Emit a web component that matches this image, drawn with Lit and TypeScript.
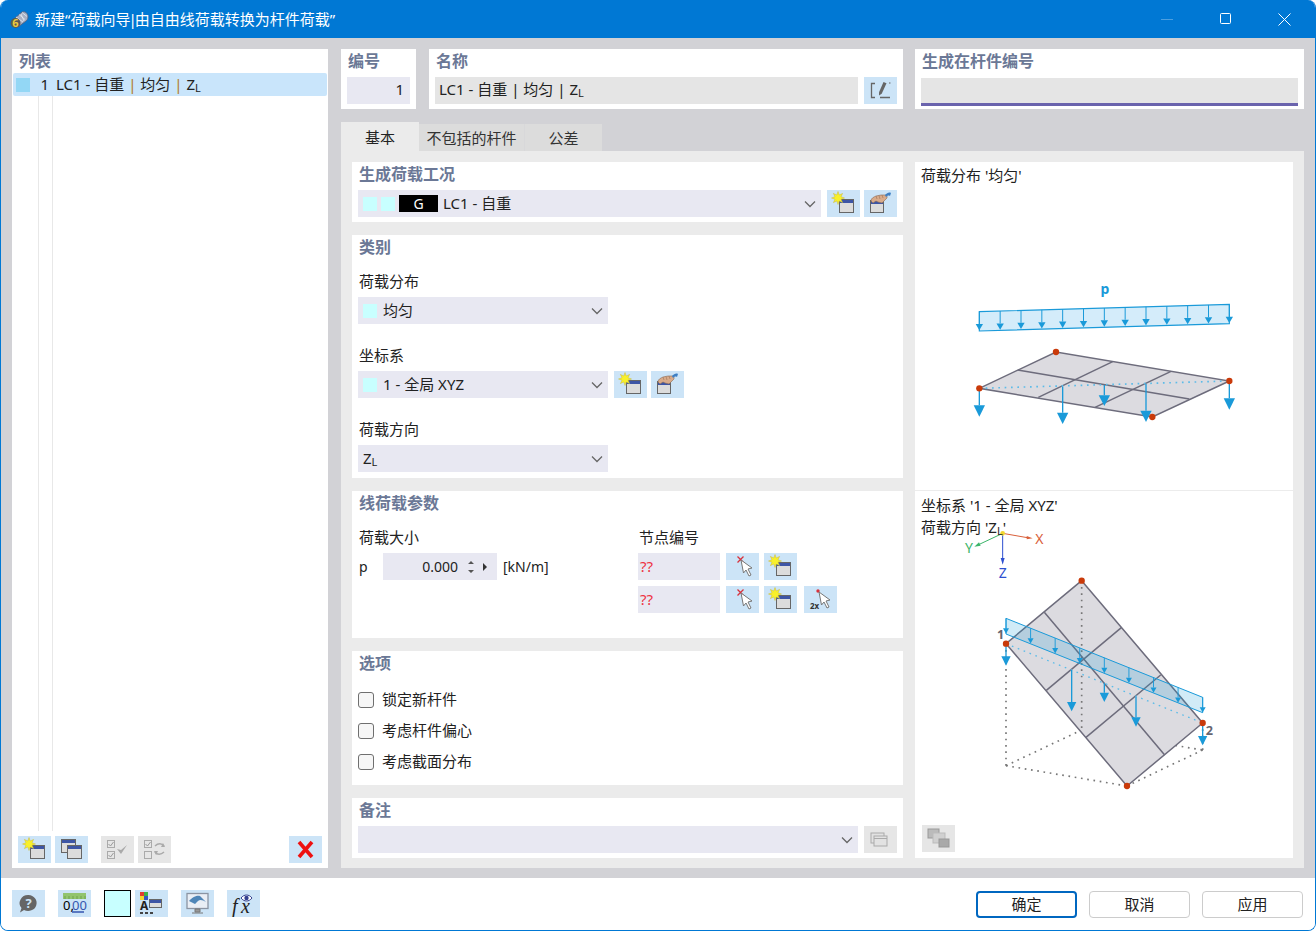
import { LitElement, html, css, svg } from "lit";
import { customElement } from "lit/decorators.js";

const BLUE = "#1a9ad9";
const GREY = "#6d6c7c";

const star = (cx: number, cy: number, r = 6.5) => {
  const pts: string[] = [];
  for (let i = 0; i < 16; i++) {
    const a = (i * Math.PI) / 8;
    const rr = i % 2 ? r * 0.5 : r;
    pts.push(`${(cx + rr * Math.cos(a)).toFixed(1)},${(cy + rr * Math.sin(a)).toFixed(1)}`);
  }
  return svg`<polygon points=${pts.join(" ")} fill="#f8f02a" stroke="#c9b93a" stroke-width=".5"/>`;
};
const win = (x: number, y: number, w: number, h: number) => svg`
  <rect x=${x + 0.5} y=${y + 0.5} width=${w - 1} height=${h - 1} fill="#dcdcdc" stroke="#666"/>
  <rect x=${x + 1} y=${y + 1} width=${w - 2} height="3" fill="#3d55a5"/>`;
const wrap = (c: unknown) => html`<svg class="ic" viewBox="0 0 33 27" width="33" height="27">${c}</svg>`;

const icNew = () => wrap(svg`${win(12, 9, 15, 14)}${star(11, 8)}`);
const icHand = () => wrap(svg`${win(6, 10, 14, 13)}
  <path d="M7 11c0-3 3-4 5-5l5-1 6 0 0 3-3 3-2 2-4-1-2-1-3 2z" fill="#d9ab8a" stroke="#8a6a55" stroke-width=".6"/>
  <path d="M12 6l1 3M15 5.500l1 3.500M18 5l1 3" stroke="#9a7258" stroke-width=".6"/>
  <path d="M21 5c2-2 4-3 6-2l-1 3c-2-1-3 0-4 1z" fill="#3d7fc4"/>`);
const icCopy = () => wrap(svg`${win(6, 3, 15, 14)}${win(12, 9, 15, 14)}`);
const icEdit = () => wrap(svg`
  <path d="M11 6.500H7.500V20.500H11M16 20.500H26" fill="none" stroke="#666" stroke-width="1.300"/>
  <path d="M19.500 5l3 1.300-4.800 10.500-2.700 1.700 0-3.300z" fill="#666"/>
  <path d="M25 6h1.500" stroke="#666"/>`);
const chk = (x: number, y: number, on = true) => svg`
  <rect x=${x + 0.5} y=${y + 0.5} width="7" height="7" fill="#e6e6e6" stroke="#aaa"/>
  ${on ? svg`<path d="M${x + 1.5} ${y + 4}l2 2 3-4" fill="none" stroke="#999"/>` : ""}`;
const icChecks = () => wrap(svg`${chk(6, 4)}${chk(6, 15)}<path d="M16 13l4 5 6-9-6 5z" fill="#aaa"/>`);
const icSwap = () => wrap(svg`${chk(6, 4)}${chk(6, 15, false)}
  <path d="M17 10c3-3 7-3 9 0M26 16c-3 3-7 3-9 0" fill="none" stroke="#aaa" stroke-width="1.500"/>
  <path d="M25 7l2 4-4 0zM18 19l-2-4 4 0z" fill="#aaa"/>`);
const icX = () => wrap(svg`<path d="M10 6l13 15M23 6L10 21" stroke="#ee1111" stroke-width="3.600"/>`);
const cursor = (x: number, y: number) => svg`
  <path d="M${x} ${y}l2.500 13 2.500-3 3 6 2-1-3-6 4-1z" fill="#fff" stroke="#777"/>`;
const icPickX = () => wrap(svg`<path d="M11.500 3.500l6 6M17.500 3.500l-6 6" stroke="#d8323c" stroke-width="1.300"/>${cursor(15, 7)}`);
const ic2x = () => wrap(svg`<circle cx="14" cy="5" r="1.700" fill="#d8323c"/>${cursor(15, 6)}
  <text x="6" y="23" class="t2x">2x</text>`);
const icHelp = () => wrap(svg`
  <path d="M16.500 5a8.500 8 0 1 1-4.500 15l-4 2.500 1.500-4.500a8.500 8 0 0 1 7-13z" fill="#666"/>
  <text x="16.500" y="18" text-anchor="middle" class="thelp">?</text>`);
const icDec = () => wrap(svg`
  <rect x="5" y="3" width="23" height="6" fill="#92c46f"/>
  <path d="M7 6v3M11 6v3M15 6v3M19 6v3M23 6v3M27 6v3" stroke="#5f9a3e" stroke-width=".7"/>
  <text x="5" y="20" class="tdec">0,</text>
  <text x="14" y="20" class="tdec" fill="#3456b0">00</text>
  <path d="M14 22h12" stroke="#3456b0" stroke-width="1.300"/>`);
const icColors = () => wrap(svg`
  <rect x="5" y="2" width="4" height="4" fill="#e23b2f"/><rect x="9" y="2" width="4" height="4" fill="#3cb04a"/>
  <rect x="5" y="6" width="4" height="4" fill="#f2d52f"/><rect x="9" y="6" width="4" height="4" fill="#3456c4"/>
  <text x="5" y="20" class="tA">A</text>
  <path d="M5 22h3v2H5zM10 22h3v2h-3zM15 22h3v2h-3z" fill="#444"/>
  ${win(14, 9, 13, 9)}`);
const icMon = () => wrap(svg`
  <rect x="6" y="3.500" width="21" height="15" fill="#e9eef5" stroke="#8b94a3" stroke-width="1.300"/>
  <path d="M8 11c4-5 9-6 11-5l6 6c-3-2-6-3-8-1l-3 3z" fill="#4f86b8"/>
  <path d="M14 19h5v3h-5zM11 23h11" stroke="#777" fill="#999"/>`);
const icFx = () => wrap(svg`
  <text x="5" y="23" class="tfx">f</text><text x="14" y="23" class="tfx">x</text>
  <path d="M14 8c3-4 8-4 11 0-3 4-8 4-11 0z" fill="#fff" stroke="#34408f"/>
  <circle cx="19.500" cy="8" r="2.200" fill="#34408f"/>`);
const icGallery = () => wrap(svg`
  <rect x="6" y="4" width="11" height="9" fill="#bbb" stroke="#999"/>
  <rect x="11" y="8" width="12" height="10" fill="#d0d0d0" stroke="#bbb"/>
  <rect x="17" y="14" width="10" height="8" fill="#a9a9a9" stroke="#999"/>`);
const icStack = () => wrap(svg`
  <rect x="7" y="7" width="13" height="10" fill="#e2e2e2" stroke="#aaa"/>
  <rect x="10" y="10" width="13" height="10" fill="#e2e2e2" stroke="#aaa"/>
  <path d="M10 12.500h13" stroke="#aaa"/>`);

const chevron = html`<svg class="chev" viewBox="0 0 12 8" width="12" height="8"><path d="M1 1.500l5 5 5-5" fill="none" stroke="#666" stroke-width="1.300"/></svg>`;
const zl = html`<span class="zl">Z<sub>L</sub></span>`;

const arrow = (x: number, y1: number, y2: number, hw: number, hh: number, sw: number) => svg`
  <path d="M${x} ${y1}V${y2 - hh}" stroke=${BLUE} stroke-width=${sw}/>
  <polygon points="${x - hw},${y2 - hh} ${x + hw},${y2 - hh} ${x},${y2}" fill=${BLUE}/>`;
const dot = (x: number, y: number, r = 9.5) => svg`<circle cx=${x} cy=${y} r=${r} fill="#c93a0a"/>`;
const line = (a: number[]) => svg`<path d="M${a[0]} ${a[1]}L${a[2]} ${a[3]}" stroke=${GREY} stroke-width="4.500"/>`;
const dotted = (a: number[], c = "#777", w = 5) => svg`<path d="M${a[0]} ${a[1]}L${a[2]} ${a[3]}" stroke=${c} stroke-width=${w} stroke-dasharray="5 14"/>`;

const range = (n: number) => Array.from({ length: n }, (_, i) => i);

const diagram1 = () => html`<svg class="dia" viewBox="15 6 1134 987" width="378" height="329">
  <polygon points="208,455 958,433 958,491 208,513" fill="#d4ecfa" stroke=${BLUE} stroke-width="3.500"/>
  ${range(13).map((i) => {
    const x = 208 + i * 62.5;
    const t = 455 - (i * 22) / 12;
    return arrow(x, t, t + 56, 11, 19, 3);
  })}
  <text x="585" y="402" text-anchor="middle" class="tp">p</text>
  <polygon points="208,685 438,576 958,663 727,771" fill="#dcdbe0" stroke=${GREY} stroke-width="4.500"/>
  ${[[323, 630, 838, 717], [608, 605, 385, 712], [783, 634, 555, 742]].map(line)}
  ${dotted([208, 685, 958, 663], "#5cbbe8")}
  ${arrow(208, 685, 770, 17, 34, 4)}${arrow(458, 680, 792, 17, 34, 4)}${arrow(583, 675, 738, 17, 32, 4)}
  ${arrow(708, 672, 786, 17, 34, 4)}${arrow(958, 663, 749, 17, 34, 4)}
  ${dot(208, 685)}${dot(438, 576)}${dot(958, 663)}${dot(727, 771)}
</svg>`;

const diagram2 = () => html`<svg class="dia" viewBox="15 3 1134 1101" width="378" height="367">
  ${[[288, 461, 288, 827], [288, 827, 651, 888], [288, 827, 515, 720], [515, 720, 878, 780], [878, 780, 651, 888], [878, 699, 878, 780]].map((a) => dotted(a))}
  <polygon points="515,272 878,699 651,888 288,461" fill="#dcdbe0" stroke=${GREY} stroke-width="4.500"/>
  ${dotted([515, 272, 515, 720])}
  ${[[403, 367, 764, 795], [634, 413, 409, 601], [752, 555, 527, 743]].map(line)}
  ${dotted([288, 461, 878, 699], "#5cbbe8", 4)}
  <polygon points="288,385 878,622 878,668 288,432" fill="#1a9ad9" fill-opacity=".2" stroke=${BLUE} stroke-width="3"/>
  ${range(9).map((i) => {
    const x = 288 + i * 73.75;
    const t = 385 + i * 29.6;
    return arrow(x, t, t + 46, 9, 16, 2.800);
  })}
  ${arrow(288, 461, 527, 14, 28, 4)}${arrow(485, 540, 664, 14, 28, 4)}${arrow(583, 578, 636, 14, 28, 4)}
  ${arrow(678, 620, 710, 14, 28, 4)}${arrow(878, 699, 766, 14, 28, 4)}
  ${dot(515, 272)}${dot(288, 461)}${dot(878, 699)}${dot(651, 888)}
  <text x="272" y="446" text-anchor="middle" class="tn">1</text>
  <text x="898" y="736" text-anchor="middle" class="tn">2</text>
  <path d="M278 130L352 143" stroke="#d9603b" stroke-width="3"/><polygon points="368,145 350,138 350,148" fill="#d9603b"/>
  <path d="M278 130L208 163" stroke="#3cb56a" stroke-width="3"/><polygon points="193,170 207,157 212,167" fill="#3cb56a"/>
  <path d="M278 130V206" stroke="#2d4fd0" stroke-width="3"/><polygon points="278,224 272,204 284,204" fill="#2d4fd0"/>
  <circle cx="278" cy="130" r="7" fill="#f2d52f"/>
  <text x="388" y="163" text-anchor="middle" class="ta" fill="#d9603b">X</text>
  <text x="177" y="188" text-anchor="middle" class="ta" fill="#3cb56a">Y</text>
  <text x="278" y="263" text-anchor="middle" class="ta" fill="#2d4fd0">Z</text>
</svg>`;

@customElement("app-root")
export class AppRoot extends LitElement {
  static styles = css`
    :host {
      display: block;
      width: 1316px;
      height: 931px;
      background: #fff;
      font-family: "Noto Sans", "Noto Sans CJK SC", sans-serif;
      font-size: 15px;
      color: #222;
      overflow: hidden;
    }
    * { box-sizing: border-box; }
    .win { width: 1316px; height: 931px; display: flex; flex-direction: column; border: 1px solid #0078d4; border-top: none; border-radius: 8px; overflow: hidden; }
    .titlebar { height: 38px; margin: 0 -1px; background: #0078d4; color: #fff; display: flex; align-items: center; padding-left: 10px; font-size: 15px; flex: none; }
    .titlebar .app { margin-right: 6px; flex: none; }
    .ttl { padding-bottom: 2px; white-space: nowrap; }
    .bar1 { margin: 0 -2px; }
    .controls { margin-left: auto; margin-right: 2px; display: flex; }
    .ctl { width: 59px; height: 38px; display: flex; align-items: center; justify-content: center; }
    .main { height: 840px; flex: none; background: #d2d2d6; padding: 11px 11px 10px 11px; display: grid; grid-template-columns: 316px 963px; column-gap: 13px; }
    .list { background: #fff; display: flex; flex-direction: column; position: relative; padding-bottom: 5px; }
    .title { height: 24px; line-height: 24px; font-size: 16px; font-weight: 700; color: #6b7896; padding-left: 7px; flex: none; }
    .row { margin: 0 1px; height: 23px; background: #c9e5fb; border-radius: 2px; display: flex; align-items: center; flex: none; padding-bottom: 2px; }
    .row .sw { width: 14px; height: 14px; background: #93d7f5; margin: 2px 0 0 3px; }
    .row .num { width: 19px; text-align: right; }
    .row .txt { margin-left: 7px; white-space: nowrap; }
    .sep { color: #b27c2e; }
    .tree { flex: 1; margin-left: 26px; width: 15px; border-left: 1px solid #e8e8e8; border-right: 1px solid #e8e8e8; margin-bottom: 5px; }
    .listbar { display: flex; padding-left: 6px; height: 27px; flex: none; }
    .ic { display: block; flex: none; }
    .btn { width: 33px; height: 27px; background: #cce4f7; flex: none; display: block; }
    .btn.off { background: #e6e6e6; }
    .ml4 { margin-left: 4px; }
    .ml5 { margin-left: 5px; }
    .ml6 { margin-left: 6px; }
    .ml7 { margin-left: 7px; }
    .ml13 { margin-left: 13px; }
    .push { margin-left: auto; margin-right: 6px; }
    .right { display: flex; flex-direction: column; }
    .top { display: flex; height: 60px; flex: none; }
    .tc { background: #fff; padding: 0 6px; }
    .tc .title { padding-left: 1px; height: 24px; }
    .tc1 { width: 75px; }
    .tc2 { width: 474px; margin-left: 13px; }
    .tc3 { width: 389px; margin-left: 12px; }
    .fieldrow { display: flex; margin-top: 4px; }
    .f { height: 27px; line-height: 25px; padding: 0 4px; white-space: nowrap; }
    .f.lil { background: #e8e8f2; }
    .f.grey { background: #e5e5e5; flex: 1; }
    .f.num { text-align: right; width: 63px; padding-right: 6px; }
    .gen { height: 28px; margin-top: 5px; background: #e5e5e5; border-bottom: 3px solid #6a63ad; }
    .tabs { display: flex; align-items: flex-end; height: 29px; margin-top: 13px; flex: none; }
    .tab { height: 27px; line-height: 28px; text-align: center; background: #dcdcdc; color: #333; }
    .tab.on { background: #ebebeb; width: 78px; height: 29px; line-height: 31px; color: #222; }
    .tab.b { width: 105px; }
    .tab.c { width: 78px; border-left: 1px solid #d8d8da; }
    .panel { height: 717px; background: #ebebeb; padding: 11px; display: grid; grid-template-columns: 551px 378px; column-gap: 12px; }
    .cards { display: flex; flex-direction: column; gap: 13px; }
    .card { background: #fff; padding: 0 6px; }
    .card .title { padding-left: 1px; }
    .h60 { height: 60px; }
    .h243 { height: 243px; }
    .h147 { height: 147px; }
    .h134 { height: 134px; }
    .sel { height: 27px; background: #e8e8f2; display: flex; align-items: center; padding: 0 5px; white-space: nowrap; }
    .sel .lbl { margin-bottom: 2px; }
    .sel .chev { margin-left: auto; flex: none; }
    .selw { width: 463px; }
    .sel250 { width: 250px; }
    .sel500 { width: 500px; }
    .cyan { width: 14px; height: 14px; background: #c8ffff; flex: none; margin-right: 4px; }
    .cyan.gap { margin-right: 6px; }
    .g { width: 39px; height: 17px; background: #000; color: #fff; text-align: center; line-height: 17px; font-size: 14px; margin-right: 5px; flex: none; }
    .label { height: 24px; line-height: 24px; margin-top: 10px; margin-bottom: 4px; padding-left: 1px; }
    .label.mt19 { margin-top: 19px; }
    .frow { display: flex; align-items: flex-start; }
    .tmt { margin-top: 4px; }
    .params { display: grid; grid-template-columns: 280px 1fr; }
    .pfield { width: 114px; height: 27px; background: #e8e8f2; display: flex; align-items: center; margin-left: 14px; font-size: 14px; }
    .pfield .val { width: 75px; text-align: right; }
    .spin { margin-left: 9px; display: block; flex: none; }
    .tri { margin-left: 7px; display: block; flex: none; }
    .unit { margin-left: 6px; line-height: 27px; font-size: 14px; }
    .p { line-height: 27px; width: 11px; padding-left: 1px; font-size: 14px; }
    .node { width: 82px; height: 27px; background: #e8e8f2; color: #ee3344; line-height: 27px; padding-left: 2px; flex: none; }
    .mt6 { margin-top: 6px; }
    .opts { margin-top: 9px; }
    .opt { height: 31px; display: flex; align-items: center; }
    .opt .t { margin-bottom: 2px; }
    .cb { width: 16px; height: 16px; border: 1px solid #6f6f6f; border-radius: 3px; background: #f6f6f6; margin-right: 8px; flex: none; }
    .previews { background: #fff; display: flex; flex-direction: column; }
    .pv { position: relative; }
    .pv.a { height: 329px; border-bottom: 1px solid #ececec; }
    .pv.b { height: 367px; }
    .dia { position: absolute; left: 0; top: 0; }
    .cap { position: relative; padding: 2px 0 0 6px; line-height: 22px; white-space: pre; }
    .pv.b .cap { padding-top: 3px; }
    .dbtn { position: absolute; left: 7px; bottom: 6px; }
    .bar { flex: 1; background: #fff; display: flex; align-items: flex-start; padding: 12px 12px 0 11px; }
    .swatch { width: 27px; height: 27px; background: #c8ffff; border: 1.500px solid #000; flex: none; }
    .ml13b { margin-left: 13px; }
    .ml3 { margin-left: 4px; }
    .actions { margin-left: auto; display: flex; gap: 12px; padding-top: 1px; }
    .act { width: 101px; height: 27px; border: 1px solid #ccc; border-radius: 4px; text-align: center; line-height: 24px; background: #fff; }
    .act.def { border: 2px solid #0067c0; line-height: 22px; }
    .tp { font: 700 42px "Noto Sans", sans-serif; fill: #1a9ad9; }
    .tn { font: 700 38px "Noto Sans", sans-serif; fill: #66656f; }
    .ta { font: 400 42px "Noto Sans", sans-serif; }
    .t2x { font: 700 8px "Noto Sans", sans-serif; fill: #333; }
    .thelp { font: 700 13px "Noto Sans", sans-serif; fill: #cce4f7; }
    .tdec { font: 400 13px "Noto Sans", sans-serif; }
    .tA { font: 700 12px "Noto Sans", sans-serif; fill: #222; }
    .tfx { font: italic 400 20px "Liberation Serif", serif; fill: #222; }
    .zl sub { font-size: 11px; vertical-align: baseline; position: relative; top: 2px; }
  `;

  render() {
    return html`<div class="win">
      <div class="titlebar">
        <svg class="app" width="19" height="19" viewBox="0 0 19 19">
          <path d="M4 9l8-7c3-1 6 1 6 5 0 2-1 3-2 4l-8 6z" fill="#a6b0c4" stroke="#55607a" stroke-width=".8"/>
          <path d="M6 7l7 5M9 4.500l6 5M12 2.500l5 4M14 11l-3-7" stroke="#e6ebf2" stroke-width=".8" fill="none"/>
          <circle cx="5.500" cy="13" r="5" fill="#5a5a55"/>
          <text x="5.500" y="17" text-anchor="middle" font-size="11" font-weight="700" fill="#eccb3c" font-family="Noto Sans">6</text>
        </svg>
        <span class="ttl">新建“荷载向导<span class="bar1">|</span>由自由线荷载转换为杆件荷载”</span>
        <div class="controls">
          <div class="ctl"><svg width="12" height="12" viewBox="0 0 12 12"><path d="M0 6.500h12" stroke="#4c9fe0"/></svg></div>
          <div class="ctl"><svg width="12" height="12" viewBox="0 0 12 12"><rect x=".5" y=".5" width="10" height="10" rx="1" fill="none" stroke="#fff"/></svg></div>
          <div class="ctl"><svg width="13" height="13" viewBox="0 0 13 13"><path d="M.5.500l12 12M12.500.500l-12 12" stroke="#fff"/></svg></div>
        </div>
      </div>
      <div class="main">
        <div class="list">
          <div class="title">列表</div>
          <div class="row"><span class="sw"></span><span class="num">1</span>
            <span class="txt">LC1 - 自重 <span class="sep">|</span> 均匀 <span class="sep">|</span> ${zl}</span></div>
          <div class="tree"></div>
          <div class="listbar">
            <span class="btn">${icNew()}</span><span class="btn ml4">${icCopy()}</span>
            <span class="btn off ml13">${icChecks()}</span><span class="btn off ml4">${icSwap()}</span>
            <span class="btn push">${icX()}</span>
          </div>
        </div>
        <div class="right">
          <div class="top">
            <div class="tc tc1"><div class="title">编号</div><div class="fieldrow"><div class="f lil num">1</div></div></div>
            <div class="tc tc2"><div class="title">名称</div>
              <div class="fieldrow"><div class="f grey">LC1 - 自重 | 均匀 | ${zl}</div><span class="btn ml6">${icEdit()}</span></div></div>
            <div class="tc tc3"><div class="title">生成在杆件编号</div><div class="gen"></div></div>
          </div>
          <div class="tabs">
            <div class="tab on">基本</div><div class="tab b">不包括的杆件</div><div class="tab c">公差</div>
          </div>
          <div class="panel">
            <div class="cards">
              <div class="card h60">
                <div class="title">生成荷载工况</div>
                <div class="frow tmt">
                  <div class="sel selw"><span class="cyan"></span><span class="cyan"></span><span class="g">G</span><span class="lbl">LC1 - 自重</span>${chevron}</div>
                  <span class="btn ml6">${icNew()}</span><span class="btn ml4">${icHand()}</span>
                </div>
              </div>
              <div class="card h243">
                <div class="title">类别</div>
                <div class="label">荷载分布</div>
                <div class="sel sel250"><span class="cyan gap"></span><span class="lbl">均匀</span>${chevron}</div>
                <div class="label mt19">坐标系</div>
                <div class="frow">
                  <div class="sel sel250"><span class="cyan gap"></span><span class="lbl">1 - 全局 XYZ</span>${chevron}</div>
                  <span class="btn ml6">${icNew()}</span><span class="btn ml4">${icHand()}</span>
                </div>
                <div class="label mt19">荷载方向</div>
                <div class="sel sel250"><span class="lbl">${zl}</span>${chevron}</div>
              </div>
              <div class="card h147">
                <div class="title">线荷载参数</div>
                <div class="params">
                  <div>
                    <div class="label">荷载大小</div>
                    <div class="frow">
                      <span class="p">p</span>
                      <div class="pfield"><span class="val">0.000</span>
                        <svg class="spin" width="8" height="18" viewBox="0 0 8 18"><path d="M4 3l3 3H1zM4 15l3-3H1z" fill="#555"/></svg>
                        <svg class="tri" width="6" height="10" viewBox="0 0 6 10"><path d="M1 1l4 4-4 4z" fill="#333"/></svg>
                      </div>
                      <span class="unit">[kN/m]</span>
                    </div>
                  </div>
                  <div>
                    <div class="label">节点编号</div>
                    <div class="frow"><div class="node">??</div><span class="btn ml6">${icPickX()}</span><span class="btn ml5">${icNew()}</span></div>
                    <div class="frow mt6"><div class="node">??</div><span class="btn ml6">${icPickX()}</span><span class="btn ml5">${icNew()}</span><span class="btn ml7">${ic2x()}</span></div>
                  </div>
                </div>
              </div>
              <div class="card h134">
                <div class="title">选项</div>
                <div class="opts">
                  <div class="opt"><span class="cb"></span><span class="t">锁定新杆件</span></div>
                  <div class="opt"><span class="cb"></span><span class="t">考虑杆件偏心</span></div>
                  <div class="opt"><span class="cb"></span><span class="t">考虑截面分布</span></div>
                </div>
              </div>
              <div class="card h60">
                <div class="title">备注</div>
                <div class="frow tmt">
                  <div class="sel sel500">${chevron}</div>
                  <span class="btn off ml6">${icStack()}</span>
                </div>
              </div>
            </div>
            <div class="previews">
              <div class="pv a">${diagram1()}<div class="cap">荷载分布 '均匀'</div></div>
              <div class="pv b">${diagram2()}<div class="cap">坐标系 '1 - 全局 XYZ'
荷载方向 '${zl}'</div><span class="btn off dbtn">${icGallery()}</span></div>
            </div>
          </div>
        </div>
      </div>
      <div class="bar">
        <span class="btn">${icHelp()}</span>
        <span class="btn ml13b">${icDec()}</span>
        <span class="swatch ml13b"></span>
        <span class="btn ml3">${icColors()}</span>
        <span class="btn ml13b">${icMon()}</span>
        <span class="btn ml13b">${icFx()}</span>
        <div class="actions">
          <div class="act def">确定</div><div class="act">取消</div><div class="act">应用</div>
        </div>
      </div>
    </div>`;
  }
}
